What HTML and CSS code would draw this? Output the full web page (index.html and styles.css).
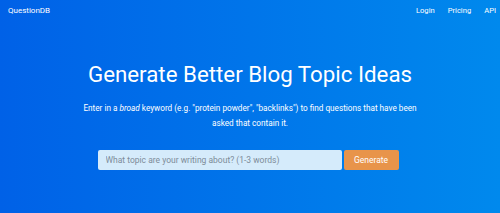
FILE: index.html
```html
<!DOCTYPE html>
<html>
<head>
<meta charset="utf-8">
<link rel="stylesheet" href="styles.css">
</head>
<body>
<div class="page">
  <header class="nav">
    <div class="brand">QuestionDB</div>
    <nav class="links">
      <a>Login</a>
      <a>Pricing</a>
      <a>API</a>
    </nav>
  </header>
  <main class="hero">
    <h1 class="title">Generate Better Blog Topic Ideas</h1>
    <p class="lead">Enter in a <em>broad</em> keyword (e.g. "protein powder", "backlinks") to find questions that have been asked that contain it.</p>
    <form class="search">
      <input class="field" type="text" placeholder="What topic are your writing about? (1-3 words)">
      <button class="btn" type="button">Generate</button>
    </form>
  </main>
</div>
</body>
</html>
```
FILE: styles.css
```css
html, body {
  margin: 0;
  padding: 0;
}
body {
  font-family: Roboto, "Liberation Sans", sans-serif;
  color: #fff;
}
.page {
  width: 500px;
  height: 213px;
  background: linear-gradient(to right, #0061e7, #0089ed);
  overflow: hidden;
}
.nav {
  display: flex;
  justify-content: space-between;
  align-items: center;
  padding: 5px 4px 0 8px;
  height: 11px;
}
.brand {
  font-size: 8px;
}
.links {
  display: flex;
  gap: 13px;
  font-size: 7.6px;
}
.hero {
  display: flex;
  flex-direction: column;
  align-items: center;
}
.title {
  margin: 45px 0 0;
  font-size: 22.3px;
  font-weight: 400;
  line-height: 26px;
}
.lead {
  margin: 14px 0 0;
  width: 350px;
  text-align: center;
  font-size: 8.2px;
  line-height: 15px;
}
.search {
  display: flex;
  gap: 2px;
  margin: 19px 4px 0 0;
}
.field {
  width: 244px;
  height: 20px;
  box-sizing: border-box;
  border: none;
  border-radius: 2px;
  background: #d5ebfb;
  padding: 0 8px;
  font-family: inherit;
  font-size: 8.5px;
  color: #333;
}
.field::placeholder {
  color: #7d8b99;
}
.btn {
  width: 55px;
  height: 20px;
  border: none;
  border-radius: 2px;
  background: #e8944a;
  color: #fff;
  font-family: inherit;
  font-size: 8.5px;
  padding: 0;
}
```
